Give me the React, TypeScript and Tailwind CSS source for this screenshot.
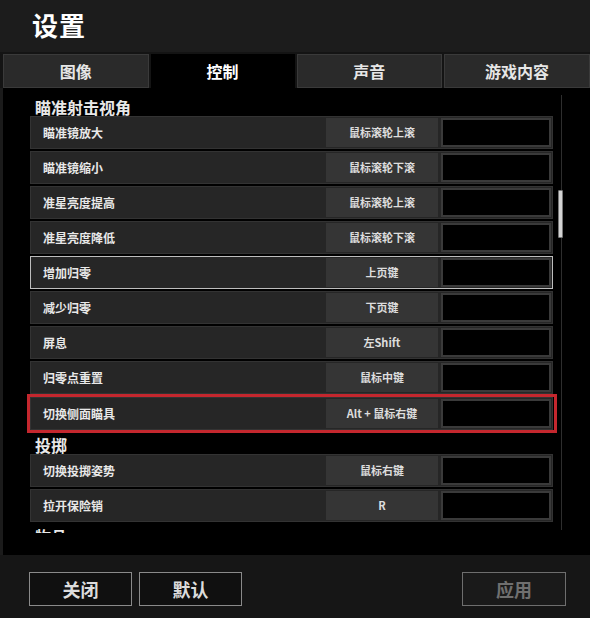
import React from 'react';

interface Binding {
    label: string;
    key: string;
    mark?: 'focus' | 'red';
}

interface Section {
    title: string;
    rows: Binding[];
}

const sections: Section[] = [
    {
        title: '瞄准射击视角',
        rows: [
            { label: '瞄准镜放大', key: '鼠标滚轮上滚' },
            { label: '瞄准镜缩小', key: '鼠标滚轮下滚' },
            { label: '准星亮度提高', key: '鼠标滚轮上滚' },
            { label: '准星亮度降低', key: '鼠标滚轮下滚' },
            { label: '增加归零', key: '上页键', mark: 'focus' },
            { label: '减少归零', key: '下页键' },
            { label: '屏息', key: '左Shift' },
            { label: '归零点重置', key: '鼠标中键' },
            { label: '切换侧面瞄具', key: 'Alt + 鼠标右键', mark: 'red' },
        ],
    },
    {
        title: '投掷',
        rows: [
            { label: '切换投掷姿势', key: '鼠标右键' },
            { label: '拉开保险销', key: 'R' },
        ],
    },
    { title: '物品', rows: [] },
];

const tabs = ['图像', '控制', '声音', '游戏内容'];

const font = { fontFamily: '"Noto Sans CJK SC", "Liberation Sans", sans-serif' };

function Row({ row }: { row: Binding }) {
    const inner = (
        <div
            className={`flex h-[33px] w-[523px] items-stretch bg-[#262626] border ${
                row.mark === 'focus' ? 'border-[#bdbdbd]' : 'border-[#333333]'
            }`}
        >
            <div className="flex flex-1 items-center pl-[12px] text-[12px] font-bold text-[#e8e8e8]">{row.label}</div>
            <div className="my-[1px] flex w-[112px] items-center justify-center bg-[#353535] text-[11px] font-bold text-[#dddddd]">
                {row.key}
            </div>
            <div className="ml-[3px] mr-[1px] my-[1px] w-[110px] border-2 border-[#3a3a3a] bg-black"></div>
        </div>
    );

    // the row picked out with a red frame in the screenshot
    if (row.mark === 'red') {
        return <div className="-mx-[3px] -my-[2px] w-[530px] border-[3px] border-[#c4272e]">{inner}</div>;
    }
    return inner;
}

export default function App() {
    return (
        <div className="flex h-[618px] w-[590px] flex-col overflow-hidden bg-black text-white" style={font}>
            {/* Title bar */}
            <header className="flex h-[52px] items-start bg-[#1c1c1c] pl-[32px] pt-[10px]">
                <h1 className="text-[26px] font-bold leading-[30px] tracking-[1px] text-white">设置</h1>
            </header>

            {/* Tabs */}
            <div className="flex h-[36px] gap-[2px] bg-[#141414] pl-[3px] pt-[2px]">
                {tabs.map((t, i) => (
                    <div
                        key={t}
                        className={`flex flex-1 items-center justify-center text-[16px] font-bold ${
                            i === 1 ? 'bg-black text-white' : 'border border-[#3a3a3a] bg-[#2a2a2a] text-[#e6e6e6]'
                        }`}
                    >
                        {t}
                    </div>
                ))}
            </div>

            {/* Settings list */}
            <div className="relative flex-1 border-l-[3px] border-[#1b1b1b] bg-black">
                <div className="h-[445px] overflow-hidden pl-[27px] pt-[7px]">
                    {sections.map((s) => (
                        <div key={s.title}>
                            <div className="flex h-[21px] items-end pb-[1px] pl-[5px] text-[16px] font-bold leading-none text-[#e8e8e8]">
                                {s.title}
                            </div>
                            <div className="flex flex-col gap-[2px] pb-[2px]">
                                {s.rows.map((r) => (
                                    <Row key={r.label} row={r} />
                                ))}
                            </div>
                        </div>
                    ))}
                </div>

                {/* Scrollbar */}
                <div className="absolute left-[558px] top-[7px] h-[435px] w-px bg-[#2e2e2e]"></div>
                <div className="absolute left-[555px] top-[102px] h-[48px] w-[5px] rounded-[1px] border border-[#777] bg-[#d4d4d4]"></div>
            </div>

            {/* Footer */}
            <footer className="flex h-[63px] items-start bg-[#161616] pl-[29px] pr-[24px] pt-[17px]">
                <button className="h-[34px] w-[103px] border border-[#8a8a8a] bg-[#101010] text-[18px] font-bold text-[#dcdcdc]">
                    关闭
                </button>
                <button className="ml-[7px] h-[34px] w-[103px] border border-[#8a8a8a] bg-[#101010] text-[18px] font-bold text-[#dcdcdc]">
                    默认
                </button>
                <button className="ml-auto h-[34px] w-[104px] border border-[#6e6e6e] bg-[#1a1a1a] text-[18px] font-bold text-[#6f6f6f]">
                    应用
                </button>
            </footer>
        </div>
    );
}
